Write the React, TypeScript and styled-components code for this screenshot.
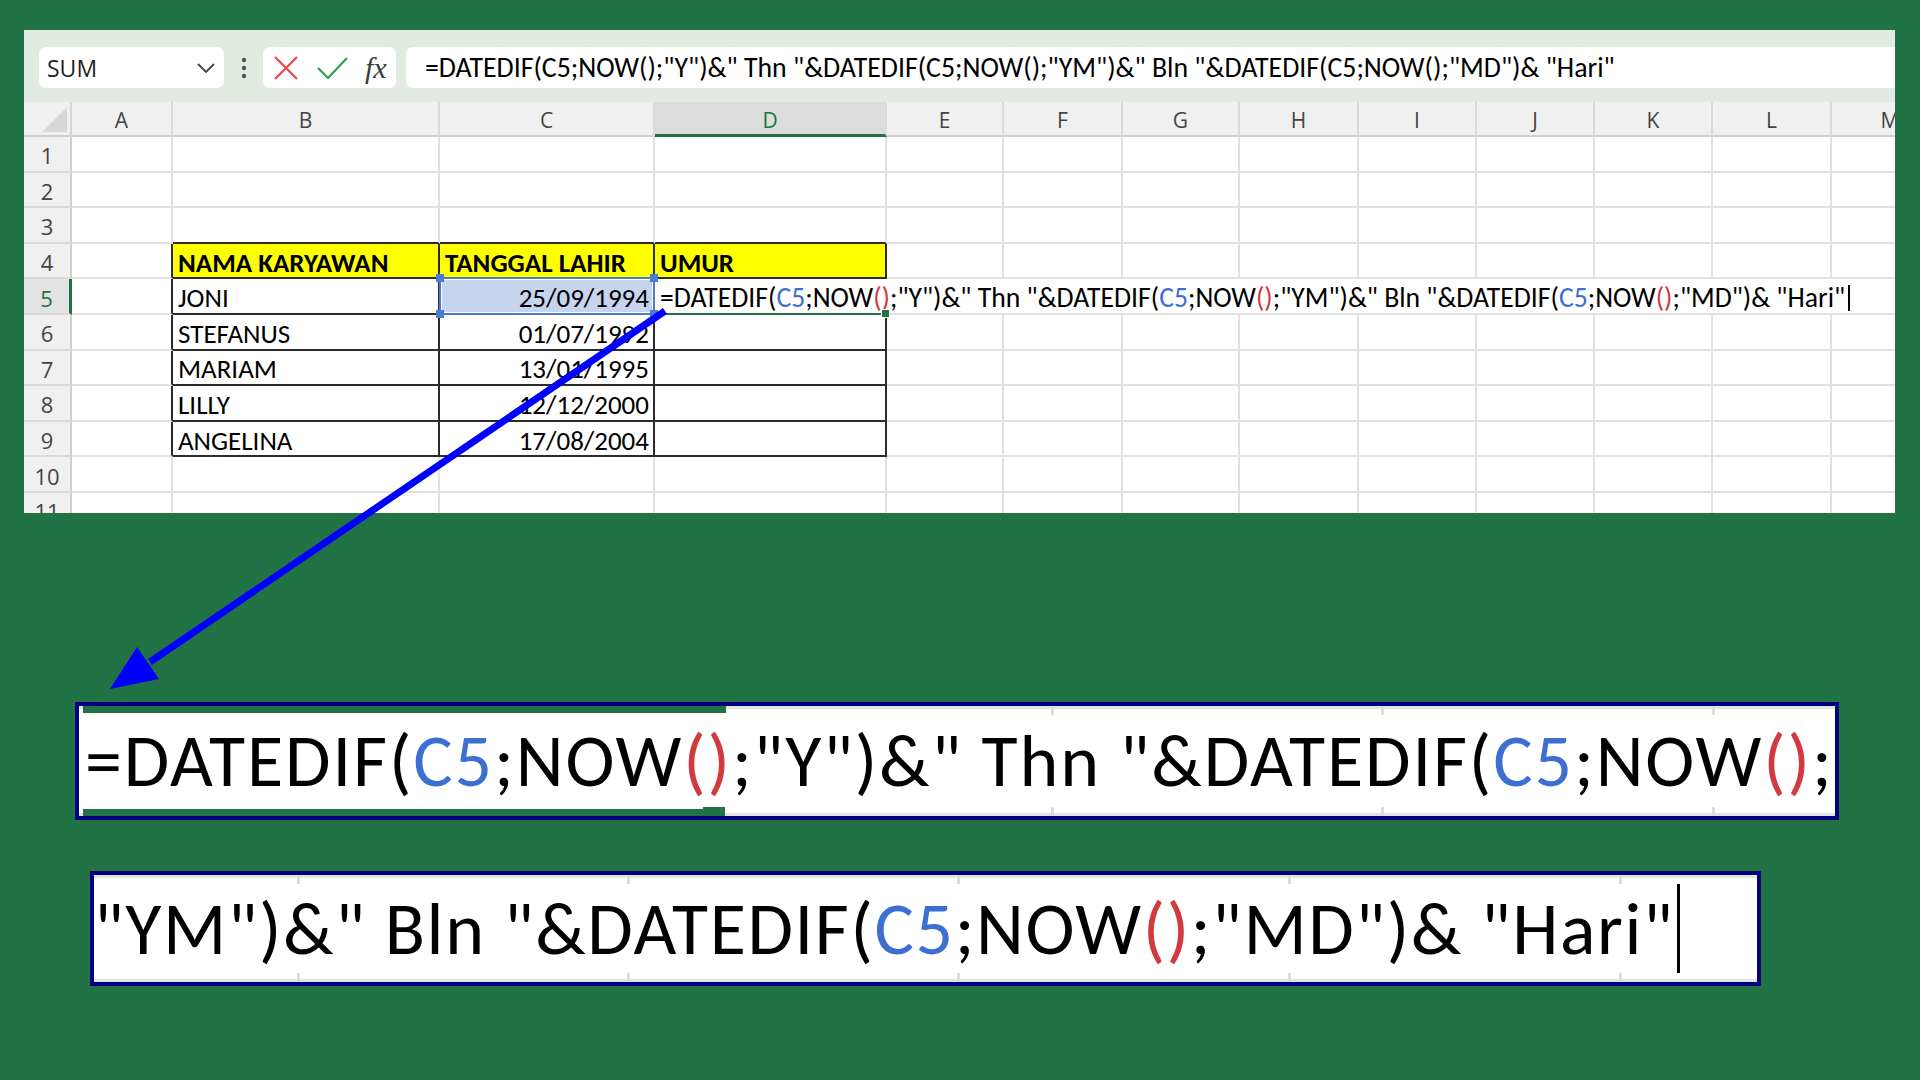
import React from "react";
import styled, { createGlobalStyle } from "styled-components";

const CAL = `Carlito, Calibri, "Open Sans", sans-serif`;
const UI = `"Open Sans", "Noto Sans", sans-serif`;
const GREEN = "#217346";
const REF_BLUE = "#3C6FD1";
const PAR_RED = "#D13A3F";

const GlobalStyle = createGlobalStyle`
  html, body { margin: 0; padding: 0; }
  body {
    background: ${GREEN};
    width: 1920px;
    height: 1080px;
    overflow: hidden;
    font-family: ${UI};
  }
`;

const Page = styled.main`
  position: relative;
  width: 1920px;
  height: 1080px;
  padding-top: 30px;
  box-sizing: border-box;
`;

const Sheet = styled.section`
  margin-left: 24px;
  width: 1871px;
  height: 483px;
  background: #fff;
  overflow: hidden;
  display: flex;
  flex-direction: column;
`;

const FormulaBar = styled.div`
  flex: none;
  height: 72px;
  box-sizing: border-box;
  background: #e2ebe2;
  display: flex;
  align-items: flex-start;
  padding: 17px 0 0 15px;
`;

const NameBox = styled.div`
  flex: none;
  width: 185px;
  height: 41px;
  box-sizing: border-box;
  background: #fff;
  border-radius: 7px;
  display: flex;
  align-items: center;
  justify-content: space-between;
  padding: 0 8px 0 8px;
  font-family: ${UI};
  font-size: 23px;
  color: #1f1f1f;
`;

const Dots = styled.div`
  flex: none;
  width: 39px;
  height: 41px;
  display: flex;
  align-items: center;
  justify-content: center;
`;

const IconBox = styled.div`
  flex: none;
  width: 133px;
  height: 41px;
  box-sizing: border-box;
  background: #fff;
  border-radius: 7px;
  display: flex;
  align-items: center;
  padding-left: 11px;
  gap: 19px;
`;

const Fx = styled.span`
  font-family: "Liberation Serif", "DejaVu Serif", serif;
  font-style: italic;
  font-size: 30px;
  color: #3b3b3b;
  line-height: 1;
  margin-left: -2px;
`;

const FormulaInput = styled.div`
  flex: 1;
  height: 41px;
  margin-left: 10px;
  margin-right: -10px;
  box-sizing: border-box;
  background: #fff;
  border-radius: 7px;
  display: flex;
  align-items: center;
  padding-left: 19px;
  font-family: ${CAL};
  font-size: 27.8px;
  color: #000;
  white-space: nowrap;
`;

const COL_WIDTHS = [101, 267, 215, 232, 117, 119, 117, 119, 118, 118, 118, 119, 118];
const LETTERS = "ABCDEFGHIJKLM".split("");

const Grid = styled.div`
  display: grid;
  grid-template-columns: 48px ${COL_WIDTHS.map((w) => `${w}px`).join(" ")};
  grid-template-rows: 35px repeat(11, 35.6px);
  width: max-content;
`;

const Corner = styled.div`
  position: relative;
  background: #f0f0f0;
  border-right: 2px solid #d6d6d6;
  border-bottom: 2px solid #cfcfcf;
  box-sizing: border-box;
  &::after {
    content: "";
    position: absolute;
    right: 3px;
    bottom: 3px;
    width: 25px;
    height: 25px;
    background: #d8d8d8;
    clip-path: polygon(100% 0, 100% 100%, 0 100%);
  }
`;

const ColHead = styled.div<{ $active?: boolean }>`
  box-sizing: border-box;
  background: ${(p) => (p.$active ? "#dcdcdc" : "#f0f0f0")};
  border-right: 2px solid #dadada;
  border-bottom: ${(p) => (p.$active ? `3px solid ${GREEN}` : "2px solid #cfcfcf")};
  color: ${(p) => (p.$active ? GREEN : "#444")};
  font-family: ${UI};
  font-size: 21px;
  display: flex;
  align-items: center;
  justify-content: center;
  padding-top: 3px;
`;

const RowHead = styled.div<{ $active?: boolean }>`
  box-sizing: border-box;
  background: ${(p) => (p.$active ? "#e3e3e3" : "#f0f0f0")};
  border-right: ${(p) => (p.$active ? `3px solid ${GREEN}` : "2px solid #cfcfcf")};
  border-bottom: 2px solid #dadada;
  color: ${(p) => (p.$active ? GREEN : "#444")};
  font-family: ${UI};
  font-size: 22px;
  display: flex;
  align-items: center;
  justify-content: center;
  padding-top: 3px;
`;

const Cell = styled.div<{
  $fill?: string;
  $bold?: boolean;
  $right?: boolean;
  $br?: string;
  $bb?: string;
}>`
  position: relative;
  box-sizing: border-box;
  background: ${(p) => p.$fill ?? "#fff"};
  border-right: 2px solid ${(p) => p.$br ?? "#e1e1e1"};
  border-bottom: 2px solid ${(p) => p.$bb ?? "#e1e1e1"};
  font-family: ${CAL};
  font-size: 27px;
  font-weight: ${(p) => (p.$bold ? 700 : 400)};
  color: #000;
  display: flex;
  align-items: center;
  justify-content: ${(p) => (p.$right ? "flex-end" : "flex-start")};
  padding: 3px 4px 0 5px;
  white-space: nowrap;
  line-height: 1;
`;

const SelectionFrame = styled.div`
  position: absolute;
  left: -1px;
  top: -2px;
  right: -2px;
  bottom: -2px;
  border: 2px solid #4a7cd0;
  box-shadow: inset 0 0 0 1px #fff;
  pointer-events: none;
  z-index: 3;
`;

const Handle = styled.span<{ $x: "l" | "r"; $y: "t" | "b" }>`
  position: absolute;
  width: 8px;
  height: 8px;
  background: #4a7cd0;
  ${(p) => (p.$x === "l" ? "left: -5px;" : "right: -5px;")}
  ${(p) => (p.$y === "t" ? "top: -5px;" : "bottom: -5px;")}
`;

const EditOverlay = styled.div`
  position: absolute;
  left: 0;
  top: 0;
  bottom: 0;
  width: 1210px;
  background: #fff;
  z-index: 2;
  display: flex;
  align-items: center;
  padding: 3px 0 0 5px;
  box-sizing: border-box;
  white-space: nowrap;
  font-size: 27.7px;
`;

const FillHandle = styled.span`
  position: absolute;
  right: -5px;
  bottom: -5px;
  width: 7px;
  height: 7px;
  background: ${GREEN};
  border: 1px solid #fff;
  z-index: 3;
`;

const Caret = styled.span<{ $h: number; $w: number }>`
  display: inline-block;
  width: ${(p) => p.$w}px;
  height: ${(p) => p.$h}px;
  background: #000;
  margin-left: 3px;
  vertical-align: middle;
`;

const Ref = styled.span`
  color: ${REF_BLUE};
`;
const Par = styled.span`
  color: ${PAR_RED};
`;

const ZoomBox = styled.div<{ $mt: number; $ml: number; $w: number; $h: number }>`
  margin: ${(p) => p.$mt}px 0 0 ${(p) => p.$ml}px;
  width: ${(p) => p.$w}px;
  height: ${(p) => p.$h}px;
  box-sizing: border-box;
  border: 4px solid #000080;
  background: #fff;
  display: flex;
  flex-direction: column;
  overflow: hidden;
`;

const Strip = styled.div<{ $pos: "top" | "bottom" }>`
  flex: none;
  height: 9px;
  display: flex;
  align-items: ${(p) => (p.$pos === "top" ? "flex-start" : "flex-end")};
`;

const StripSeg = styled.div<{ $w?: number; $pos: "top" | "bottom"; $tick?: boolean }>`
  flex: ${(p) => (p.$w ? `0 0 ${p.$w}px` : "1")};
  height: 100%;
  box-sizing: border-box;
  border-left: ${(p) => (p.$tick ? "3px solid #dcdcdc" : "none")};
  background: linear-gradient(#e3e3e3, #e3e3e3) no-repeat;
  background-size: 100% 3px;
  background-position: ${(p) => (p.$pos === "top" ? "0 0" : "0 100%")};
  display: flex;
  align-items: ${(p) => (p.$pos === "top" ? "flex-start" : "flex-end")};
`;

const GreenBar = styled.div<{ $w: number; $h: number; $ml: number }>`
  flex: none;
  width: ${(p) => p.$w}px;
  height: ${(p) => p.$h}px;
  margin-left: ${(p) => p.$ml}px;
  background: ${GREEN};
`;

const BigText = styled.div<{ $pl: number; $ls: number }>`
  flex: 1;
  display: flex;
  align-items: center;
  padding-left: ${(p) => p.$pl}px;
  font-family: ${CAL};
  font-size: 74px;
  letter-spacing: ${(p) => p.$ls}px;
  line-height: 1;
  color: #000;
  white-space: nowrap;
  overflow: hidden;
`;

const Arrow = styled.svg`
  position: absolute;
  left: 0;
  top: 0;
  width: 1920px;
  height: 1080px;
  pointer-events: none;
  z-index: 10;
`;

const FullFormula = () => (
  <>
    {"=DATEDIF("}
    <Ref>C5</Ref>
    {";NOW"}
    <Par>()</Par>
    {';"Y")&" Thn "&DATEDIF('}
    <Ref>C5</Ref>
    {";NOW"}
    <Par>()</Par>
    {';"YM")&" Bln "&DATEDIF('}
    <Ref>C5</Ref>
    {";NOW"}
    <Par>()</Par>
    {';"MD")& "Hari"'}
  </>
);

type Row = { b?: string; c?: string };
const DATA: Record<number, Row> = {
  5: { b: "JONI", c: "25/09/1994" },
  6: { b: "STEFANUS", c: "01/07/1992" },
  7: { b: "MARIAM", c: "13/01/1995" },
  8: { b: "LILLY", c: "12/12/2000" },
  9: { b: "ANGELINA", c: "17/08/2004" },
};

const DARK = "#2b2b2b";

function renderRow(r: number) {
  const cells: React.ReactNode[] = [];
  cells.push(
    <RowHead key={`h${r}`} $active={r === 5}>
      {r}
    </RowHead>
  );
  LETTERS.forEach((L) => {
    const key = `${L}${r}`;
    const inTable = r >= 4 && r <= 9 && (L === "B" || L === "C" || L === "D");
    const props: any = {};
    if (inTable) {
      props.$br = DARK;
      props.$bb = DARK;
    }
    if (L === "A" && r >= 4 && r <= 9) props.$br = DARK;
    if (r === 3 && (L === "B" || L === "C" || L === "D")) props.$bb = DARK;

    if (r === 4 && inTable) {
      const label = L === "B" ? "NAMA KARYAWAN" : L === "C" ? "TANGGAL LAHIR" : "UMUR";
      cells.push(
        <Cell key={key} {...props} $fill="#ffff00" $bold>
          {label}
        </Cell>
      );
      return;
    }
    if (r === 5 && L === "C") {
      cells.push(
        <Cell key={key} {...props} $fill="#c7d4ee" $right>
          {DATA[5].c}
          <SelectionFrame>
            <Handle $x="l" $y="t" />
            <Handle $x="r" $y="t" />
            <Handle $x="l" $y="b" />
            <Handle $x="r" $y="b" />
          </SelectionFrame>
        </Cell>
      );
      return;
    }
    if (r === 5 && L === "D") {
      cells.push(
        <Cell key={key} {...props} $bb={GREEN}>
          <EditOverlay>
            <FullFormula />
            <Caret $h={26} $w={2} />
          </EditOverlay>
          <FillHandle />
        </Cell>
      );
      return;
    }
    const row = DATA[r];
    let content: string | undefined;
    if (row && L === "B") content = row.b;
    if (row && L === "C") content = row.c;
    cells.push(
      <Cell key={key} {...props} $right={L === "C"}>
        {content}
      </Cell>
    );
  });
  return cells;
}

export default function App() {
  const rows = Array.from({ length: 11 }, (_, i) => i + 1);
  return (
    <>
      <GlobalStyle />
      <Page>
        <Sheet>
          <FormulaBar>
            <NameBox>
              <span>SUM</span>
              <svg width="20" height="12" viewBox="0 0 20 12">
                <path d="M2 2 L10 10 L18 2" fill="none" stroke="#444" strokeWidth="1.8" />
              </svg>
            </NameBox>
            <Dots>
              <svg width="6" height="24" viewBox="0 0 6 24">
                <circle cx="3" cy="4" r="2.2" fill="#555" />
                <circle cx="3" cy="12" r="2.2" fill="#555" />
                <circle cx="3" cy="20" r="2.2" fill="#555" />
              </svg>
            </Dots>
            <IconBox>
              <svg width="24" height="24" viewBox="0 0 24 24">
                <path d="M1 1 L23 23 M23 1 L1 23" stroke="#e8484a" strokeWidth="2.2" fill="none" />
              </svg>
              <svg width="31" height="22" viewBox="0 0 31 22">
                <path d="M1 11 L11 21 L30 1" stroke="#2f9e4e" strokeWidth="2.2" fill="none" />
              </svg>
              <Fx>fx</Fx>
            </IconBox>
            <FormulaInput>
              {'=DATEDIF(C5;NOW();"Y")&" Thn "&DATEDIF(C5;NOW();"YM")&" Bln "&DATEDIF(C5;NOW();"MD")& "Hari"'}
            </FormulaInput>
          </FormulaBar>
          <Grid>
            <Corner />
            {LETTERS.map((L) => (
              <ColHead key={L} $active={L === "D"}>
                {L}
              </ColHead>
            ))}
            {rows.map((r) => renderRow(r))}
          </Grid>
        </Sheet>

        <ZoomBox $mt={189} $ml={75} $w={1764} $h={118}>
          <Strip $pos="top">
            <StripSeg $pos="top" $w={647}>
              <GreenBar $w={643} $h={7} $ml={4} />
            </StripSeg>
            <StripSeg $pos="top" $w={325} />
            <StripSeg $pos="top" $w={330} $tick />
            <StripSeg $pos="top" $w={331} $tick />
            <StripSeg $pos="top" $tick />
          </Strip>
          <BigText $pl={6} $ls={1.9}>
            {"=DATEDIF("}
            <Ref>C5</Ref>
            {";NOW"}
            <Par>()</Par>
            {';"Y")&" Thn "&DATEDIF('}
            <Ref>C5</Ref>
            {";NOW"}
            <Par>()</Par>
            {";"}
          </BigText>
          <Strip $pos="bottom">
            <StripSeg $pos="bottom" $w={624}>
              <GreenBar $w={620} $h={7} $ml={4} />
            </StripSeg>
            <StripSeg $pos="bottom" $w={23}>
              <GreenBar $w={22} $h={9} $ml={0} />
            </StripSeg>
            <StripSeg $pos="bottom" $w={325} />
            <StripSeg $pos="bottom" $w={330} $tick />
            <StripSeg $pos="bottom" $w={331} $tick />
            <StripSeg $pos="bottom" $tick />
          </Strip>
        </ZoomBox>

        <ZoomBox $mt={51} $ml={90} $w={1671} $h={115}>
          <Strip $pos="top">
            <StripSeg $pos="top" $w={203} />
            <StripSeg $pos="top" $w={330} $tick />
            <StripSeg $pos="top" $w={330} $tick />
            <StripSeg $pos="top" $w={331} $tick />
            <StripSeg $pos="top" $w={331} $tick />
            <StripSeg $pos="top" $tick />
          </Strip>
          <BigText $pl={0} $ls={1.6}>
            {'"YM")&" Bln "&DATEDIF('}
            <Ref>C5</Ref>
            {";NOW"}
            <Par>()</Par>
            {';"MD")& "Hari"'}
            <Caret $h={96} $w={3} />
          </BigText>
          <Strip $pos="bottom">
            <StripSeg $pos="bottom" $w={203} />
            <StripSeg $pos="bottom" $w={330} $tick />
            <StripSeg $pos="bottom" $w={330} $tick />
            <StripSeg $pos="bottom" $w={331} $tick />
            <StripSeg $pos="bottom" $w={331} $tick />
            <StripSeg $pos="bottom" $tick />
          </Strip>
        </ZoomBox>

        <Arrow viewBox="0 0 1920 1080">
          <line x1="665" y1="311" x2="150" y2="662" stroke="#0000ff" strokeWidth="7" />
          <polygon points="110,689 159,679 137,647" fill="#0000ff" />
        </Arrow>
      </Page>
    </>
  );
}
